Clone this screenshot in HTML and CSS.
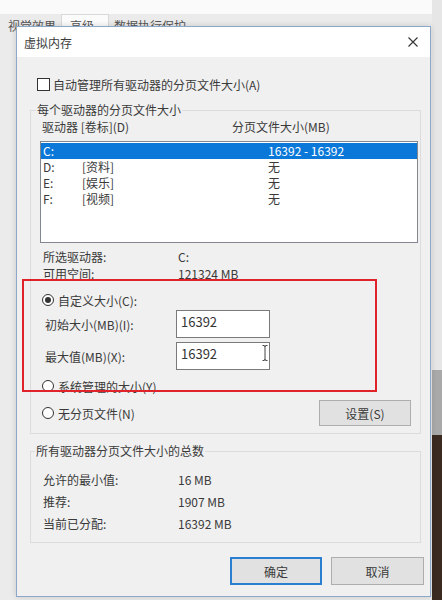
FILE: index.html
```html
<!DOCTYPE html>
<html lang="zh-CN">
<head>
    <meta charset="UTF-8">
    <title>虚拟内存</title>
    <link rel="stylesheet" href="styles.css">
</head>
<body>
    <div class="desktop">
        <div class="parent-tabs">
            <span class="tab">视觉效果</span>
            <span class="tab tab-active">高级</span>
            <span class="tab">数据执行保护</span>
        </div>

        <div class="dialog">
            <div class="titlebar">
                <span class="title">虚拟内存</span>
                <svg class="close" width="10" height="10" viewBox="0 0 10 10">
                    <path d="M0.5 0.5 L9.5 9.5 M9.5 0.5 L0.5 9.5" stroke="#333" stroke-width="1.1" fill="none"/>
                </svg>
            </div>

            <div class="dialog-body">
                <label class="check-row"><span class="checkbox"></span>自动管理所有驱动器的分页文件大小(A)</label>

                <fieldset class="group group-drives">
                    <legend>每个驱动器的分页文件大小</legend>
                    <div class="list-head">
                        <span class="col-drive">驱动器 [卷标](D)</span>
                        <span>分页文件大小(MB)</span>
                    </div>
                    <div class="listbox">
                        <div class="list-row selected"><span class="c-letter">C:</span><span class="c-label"></span><span>16392 - 16392</span></div>
                        <div class="list-row"><span class="c-letter">D:</span><span class="c-label">[资料]</span><span>无</span></div>
                        <div class="list-row"><span class="c-letter">E:</span><span class="c-label">[娱乐]</span><span>无</span></div>
                        <div class="list-row"><span class="c-letter">F:</span><span class="c-label">[视频]</span><span>无</span></div>
                    </div>

                    <div class="info-row info-first"><span class="info-key">所选驱动器:</span><span>C:</span></div>
                    <div class="info-row"><span class="info-key">可用空间:</span><span>121324 MB</span></div>

                    <label class="radio-row radio-custom"><span class="radio checked"></span>自定义大小(C):</label>
                    <div class="field-row">
                        <span class="field-label">初始大小(MB)(I):</span>
                        <div class="textbox">16392</div>
                    </div>
                    <div class="field-row field-second">
                        <span class="field-label">最大值(MB)(X):</span>
                        <div class="textbox">16392
                            <svg class="ibeam" width="6" height="16" viewBox="0 0 6 16">
                                <path d="M0.5 0.5 H2 Q3 0.5 3 2 V14 Q3 15.5 2 15.5 H0.5 M5.5 0.5 H4 Q3 0.5 3 2 M3 14 Q3 15.5 4 15.5 H5.5" stroke="#444" stroke-width="1" fill="none"/>
                            </svg>
                        </div>
                    </div>
                    <label class="radio-row radio-system"><span class="radio"></span>系统管理的大小(Y)</label>
                    <div class="set-row">
                        <label class="radio-row"><span class="radio"></span>无分页文件(N)</label>
                        <button class="btn btn-set">设置(S)</button>
                    </div>
                </fieldset>

                <fieldset class="group group-total">
                    <legend>所有驱动器分页文件大小的总数</legend>
                    <div class="total-row"><span class="total-key">允许的最小值:</span><span>16 MB</span></div>
                    <div class="total-row"><span class="total-key">推荐:</span><span>1907 MB</span></div>
                    <div class="total-row"><span class="total-key">当前已分配:</span><span>16392 MB</span></div>
                </fieldset>

                <div class="dialog-buttons">
                    <button class="btn btn-ok">确定</button>
                    <button class="btn btn-cancel">取消</button>
                </div>
            </div>
        </div>

        <div class="highlight"></div>
    </div>
</body>
</html>
```

FILE: styles.css
```css
/* Windows 10 对话框风格 */
* {
    margin: 0;
    padding: 0;
    box-sizing: border-box;
}

body {
    width: 442px;
    height: 600px;
    overflow: hidden;
    font-family: "Noto Sans CJK SC", "Noto Sans", sans-serif;
    font-size: 12px;
    color: #3a3a3a;
    background: #ededed;
}

.desktop {
    position: relative;
    width: 442px;
    height: 600px;
    background:
        linear-gradient(#e6e6e6 0 370px, #a9a9a9 370px 435px, #3b2a20 435px) right top / 10px 100% no-repeat,
        linear-gradient(#fafafa 0 14px, #ebebeb 14px);
}

/* 背后的“性能选项”窗口 */
.parent-tabs {
    display: flex;
    align-items: flex-end;
    height: 33px;
    padding-left: 3px;
}

.tab {
    padding: 0 5px;
    line-height: 15px;
    color: #555;
}

.tab-active {
    background: #fbfbfb;
    border: 1px solid #d9d9d9;
    border-bottom: none;
    padding: 3px 14px 0 8px;
}

/* 对话框 */
.dialog {
    position: absolute;
    left: 16px;
    top: 26px;
    width: 415px;
    height: 571px;
    background: #f0f0f0;
    border: 1px solid #8ca7c8;
    box-shadow: 0 0 6px rgba(0, 0, 0, 0.15);
}

.titlebar {
    display: flex;
    align-items: center;
    justify-content: space-between;
    height: 30px;
    padding: 0 12px 0 7px;
    background: #fff;
}

.title {
    color: #3c3c3c;
}

.dialog-body {
    padding: 0 6px 0 13px;
}

.check-row {
    display: flex;
    align-items: center;
    height: 16px;
    margin: 19px 0 0 7px;
}

.checkbox {
    width: 13px;
    height: 13px;
    border: 1px solid #333;
    background: #fff;
    margin-right: 3px;
}

.group {
    width: 391px;
    border: 1px solid #dcdcdc;
    margin-top: 11px;
}

.group legend {
    line-height: 14px;
    padding: 0 1px;
}

.group-drives {
    padding: 2px 2px 7px 10px;
}

.group-drives legend {
    margin-left: -5px;
}

.list-head {
    display: flex;
    height: 16px;
    line-height: 16px;
    padding-left: 1px;
}

.col-drive {
    width: 190px;
}

.listbox {
    margin: 6px 0 0 -1px;
    height: 102px;
    border: 1px solid #828790;
    background: #fff;
    padding-top: 1px;
}

.list-row {
    display: flex;
    height: 16px;
    line-height: 16px;
}

.list-row.selected {
    background: #0a78d8;
    color: #fff;
}

.c-letter {
    width: 41px;
    padding-left: 2px;
}

.c-label {
    width: 186px;
}

.info-row {
    display: flex;
    height: 17px;
    line-height: 17px;
}

.info-first {
    margin-top: 5px;
}

.info-key {
    width: 137px;
    padding-left: 2px;
}

.radio-row {
    display: flex;
    align-items: center;
    height: 16px;
    padding-left: 1px;
}

.radio-custom {
    margin-top: 10px;
}

.radio-system {
    margin-top: 8px;
}

.radio {
    position: relative;
    width: 12px;
    height: 12px;
    border: 1px solid #333;
    border-radius: 50%;
    background: #fff;
    margin-right: 4px;
}

.radio.checked::after {
    content: "";
    position: absolute;
    left: 2px;
    top: 2px;
    width: 6px;
    height: 6px;
    border-radius: 50%;
    background: #333;
}

.field-row {
    display: flex;
    align-items: center;
    height: 28px;
    margin-top: 2px;
}

.field-second {
    margin-top: 4px;
}

.field-label {
    width: 135px;
    padding-left: 4px;
}

.textbox {
    position: relative;
    width: 94px;
    height: 28px;
    border: 1px solid #7a7a7a;
    background: #fff;
    padding: 3px 4px;
    line-height: 16px;
    font-size: 13px;
    color: #333;
}

.ibeam {
    position: absolute;
    right: 1px;
    top: 2px;
}

.set-row {
    display: flex;
    align-items: center;
    justify-content: space-between;
    height: 26px;
    margin-top: 6px;
}

.btn {
    font-family: inherit;
    font-size: 12px;
    color: #3a3a3a;
    background: #e1e1e1;
    border: 1px solid #adadad;
}

.btn-set {
    width: 92px;
    height: 26px;
    margin-right: 7px;
}

.group-total {
    margin-top: 10px;
    padding: 11px 2px 7px 12px;
}

.group-total legend {
    margin-left: -8px;
}

.total-row {
    display: flex;
    height: 22px;
    line-height: 22px;
}

.total-key {
    width: 135px;
}

.dialog-buttons {
    display: flex;
    justify-content: flex-end;
    gap: 9px;
    margin-top: 14px;
}

.btn-ok,
.btn-cancel {
    height: 28px;
}

.btn-ok {
    width: 92px;
    border: 2px solid #2a7fd0;
}

.btn-cancel {
    width: 93px;
}

/* 红色标注框 */
.highlight {
    position: absolute;
    left: 22px;
    top: 279px;
    width: 355px;
    height: 113px;
    border: 2px solid #e0232b;
}
```
